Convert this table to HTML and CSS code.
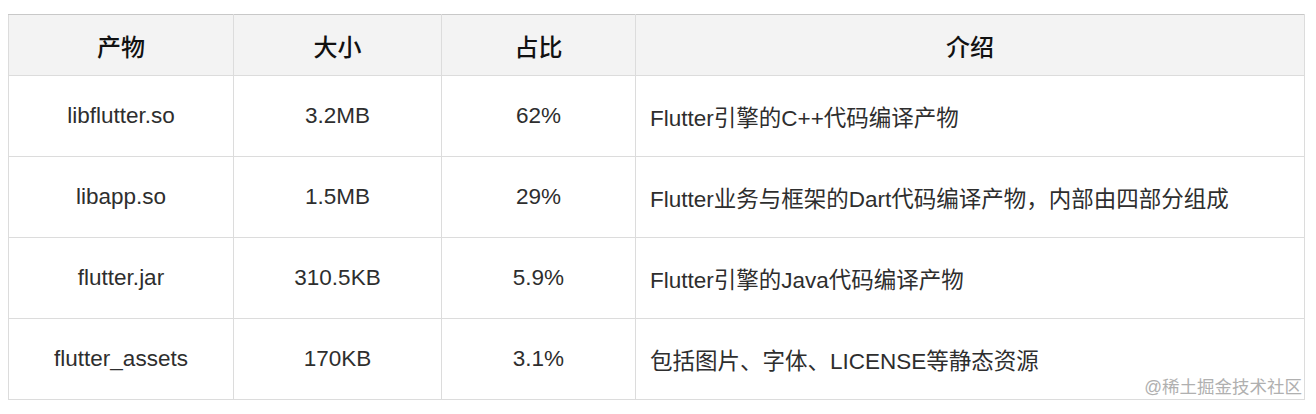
FILE: index.html
```html
<!DOCTYPE html>
<html lang="zh-CN">
<head>
<meta charset="utf-8">
<link rel="stylesheet" href="styles.css">
</head>
<body>
<div class="page">
  <div class="wrap">
    <table class="spec">
      <colgroup>
        <col class="c1"><col class="c2"><col class="c3"><col class="c4">
      </colgroup>
      <thead>
        <tr><th>产物</th><th>大小</th><th>占比</th><th>介绍</th></tr>
      </thead>
      <tbody>
        <tr><td>libflutter.so</td><td>3.2MB</td><td>62%</td><td class="desc">Flutter引擎的C++代码编译产物</td></tr>
        <tr><td>libapp.so</td><td>1.5MB</td><td>29%</td><td class="desc">Flutter业务与框架的Dart代码编译产物，内部由四部分组成</td></tr>
        <tr><td>flutter.jar</td><td>310.5KB</td><td>5.9%</td><td class="desc">Flutter引擎的Java代码编译产物</td></tr>
        <tr><td>flutter_assets</td><td>170KB</td><td>3.1%</td><td class="desc">包括图片、字体、LICENSE等静态资源</td></tr>
      </tbody>
    </table>
    <div class="mark">@稀土掘金技术社区</div>
  </div>
</div>
</body>
</html>
```

FILE: styles.css
```css
html, body {
  margin: 0;
  padding: 0;
  background: #fff;
}
.page {
  padding: 14px 0 0 8px;
  font-family: "Liberation Sans", "Noto Sans CJK SC", sans-serif;
}
.wrap {
  position: relative;
  width: 1296px;
}
.spec {
  width: 1296px;
  border-collapse: collapse;
  table-layout: fixed;
  font-size: 22.5px;
  color: #2e2e2e;
}
.c1 { width: 225px; }
.c2 { width: 208px; }
.c3 { width: 194px; }
.c4 { width: 669px; }
.spec th,
.spec td {
  border: 1px solid #dcdcdc;
  text-align: center;
  padding: 0 14px;
}
.spec thead tr {
  height: 61px;
}
.spec th {
  background: #f3f3f3;
  color: #111;
  font-weight: 500;
  font-size: 24px;
  border-top-color: #c8c8c8;
}
.spec tbody tr {
  height: 81px;
}
.spec td.desc {
  text-align: left;
}
.mark {
  position: absolute;
  right: 2px;
  bottom: 2px;
  font-size: 17.5px;
  color: #b0b0b0;
  line-height: 22px;
}
```
